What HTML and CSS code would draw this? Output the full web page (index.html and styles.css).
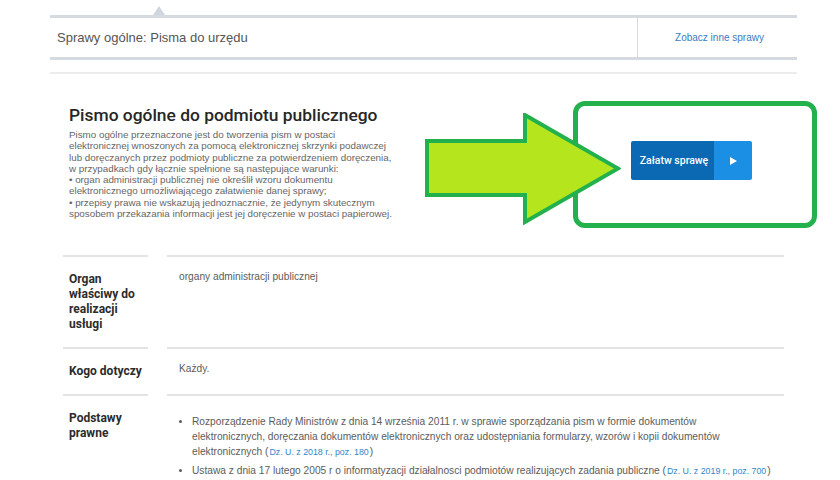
FILE: index.html
```html
<!DOCTYPE html>
<html lang="pl">
<head>
    <meta charset="UTF-8">
    <meta name="viewport" content="width=device-width, initial-scale=1.0">
    <title>Pismo ogólne do podmiotu publicznego</title>
    <link rel="stylesheet" href="styles.css">
</head>
<body>
    <div class="page">
        <div class="case-bar">
            <span class="case-bar-notch"></span>
            <div class="case-bar-title">Sprawy ogólne: Pisma do urzędu</div>
            <a class="case-bar-link" href="#">Zobacz inne sprawy</a>
        </div>

        <div class="content">
            <section class="intro">
                <div class="intro-text">
                    <h1>Pismo ogólne do podmiotu publicznego</h1>
                    <p>Pismo ogólne przeznaczone jest do tworzenia pism w postaci<br>
                    elektronicznej wnoszonych za pomocą elektronicznej skrzynki podawczej<br>
                    lub doręczanych przez podmioty publiczne za potwierdzeniem doręczenia,<br>
                    w przypadkach gdy łącznie spełnione są następujące warunki:<br>
                    • organ administracji publicznej nie określił wzoru dokumentu<br>
                    elektronicznego umożliwiającego załatwienie danej sprawy;<br>
                    • przepisy prawa nie wskazują jednoznacznie, że jedynym skutecznym<br>
                    sposobem przekazania informacji jest jej doręczenie w postaci papierowej.</p>
                </div>
                <div class="intro-action">
                    <div class="highlight">
                        <a class="start-btn" href="#">
                            <span class="start-btn-label">Załatw sprawę</span>
                            <span class="start-btn-go">
                                <svg width="7" height="8" viewBox="0 0 7 8"><path d="M0 0 L7 4 L0 8 Z" fill="#fff"/></svg>
                            </span>
                        </a>
                    </div>
                </div>
                <!-- green pointer drawn over the frame -->
                <svg class="pointer" width="196" height="112" viewBox="0 0 196 112">
                    <polygon points="2,28 100,28 100,2 193,55.5 100,109 100,82 2,82" fill="#b5e61d" stroke="#22b14c" stroke-width="4"/>
                </svg>
            </section>

            <dl class="details">
                <dt>Organ właściwy do realizacji usługi</dt>
                <dd>organy administracji publicznej</dd>

                <dt>Kogo dotyczy</dt>
                <dd>Każdy.</dd>

                <dt>Podstawy prawne</dt>
                <dd>
                    <ul>
                        <li>Rozporządzenie Rady Ministrów z dnia 14 września 2011 r. w sprawie sporządzania pism w formie dokumentów<br>
                        elektronicznych, doręczania dokumentów elektronicznych oraz udostępniania formularzy, wzorów i kopii dokumentów elektronicznych (<a href="#">Dz. U. z 2018 r., poz. 180</a>)</li>
                        <li>Ustawa z dnia 17 lutego 2005 r o informatyzacji działalnosci podmiotów realizujących zadania publiczne (<a href="#">Dz. U. z 2019 r., poz. 700</a>)</li>
                    </ul>
                </dd>
            </dl>
        </div>
    </div>
</body>
</html>
```

FILE: styles.css
```css
body {
    margin: 0;
    background-color: #fff;
    font-family: "Liberation Sans", Arial, sans-serif;
    color: #5c5c5c;
}
.page {
    width: 747px;
    margin-left: 50px;
    padding-top: 15px;
}
.case-bar {
    position: relative;
    display: flex;
    height: 39px;
    border-top: 3px solid #d5dae1;
    border-bottom: 3px solid #d5dae1;
}
.case-bar-notch {
    position: absolute;
    top: -12px;
    left: 103px;
    width: 0;
    height: 0;
    border-left: 6px solid transparent;
    border-right: 6px solid transparent;
    border-bottom: 9px solid #d0d6de;
}
.case-bar-title {
    flex: 1;
    display: flex;
    align-items: center;
    padding-left: 7px;
    font-size: 13px;
    color: #555;
}
.case-bar-link {
    width: 160px;
    display: flex;
    align-items: center;
    justify-content: center;
    padding-left: 4px;
    box-sizing: border-box;
    border-left: 1px solid #d5dae1;
    font-size: 10px;
    color: #3a7dc2;
    text-decoration: none;
}
.content {
    margin-top: 12px;
    border-top: 2px solid #ececec;
    padding: 0 13px;
}
.intro {
    position: relative;
    display: flex;
    padding: 27px 0 27px 6px;
}
.intro-text {
    width: 340px;
}
.intro-text h1 {
    margin: 3px 0 0;
    font-family: Roboto, sans-serif;
    font-weight: 500;
    font-size: 17.4px;
    line-height: 22px;
    color: #262626;
    white-space: nowrap;
}
.intro-text p {
    margin: 3px 0 0;
    font-size: 9.8px;
    line-height: 11.3px;
    color: #666;
    white-space: nowrap;
}
.intro-action {
    margin-left: auto;
    margin-right: -33px;
}
.highlight {
    width: 121px;
    height: 39px;
    padding: 35px 60px 43px 53px;
    border: 5px solid #22b14c;
    border-radius: 12px;
}
.start-btn {
    display: flex;
    height: 39px;
    border-radius: 2px;
    overflow: hidden;
    text-decoration: none;
    color: #fff;
    font-family: Roboto, sans-serif;
    font-weight: 500;
    font-size: 10.5px;
}
.start-btn-label {
    width: 83px;
    display: flex;
    align-items: center;
    justify-content: center;
    padding-left: 3px;
    box-sizing: border-box;
    background-color: #0b69b4;
}
.start-btn-go {
    flex: 1;
    display: flex;
    align-items: center;
    justify-content: center;
    background-color: #1a8fe3;
}
.pointer {
    position: absolute;
    left: 362px;
    top: 39px;
}
.details {
    display: grid;
    grid-template-columns: 85px 617px;
    column-gap: 19px;
    margin: 0;
}
.details dt {
    border-top: 2px solid #e4e4e4;
    padding: 15px 6px;
    font-family: Roboto, sans-serif;
    font-weight: 700;
    font-size: 12px;
    line-height: 15px;
    color: #2b2b2b;
}
.details dd {
    margin: 0;
    border-top: 2px solid #e4e4e4;
    padding: 12px 0 0 12px;
    font-size: 10.2px;
    line-height: 15px;
    color: #5c5c5c;
}
.details ul {
    margin: 6px 0 0;
    padding-left: 13px;
}
.details li + li {
    margin-top: 4px;
}
.details a {
    margin: 0 1px;
    font-size: 8.8px;
    line-height: 1;
    color: #2f86cc;
    text-decoration: none;
}
```
